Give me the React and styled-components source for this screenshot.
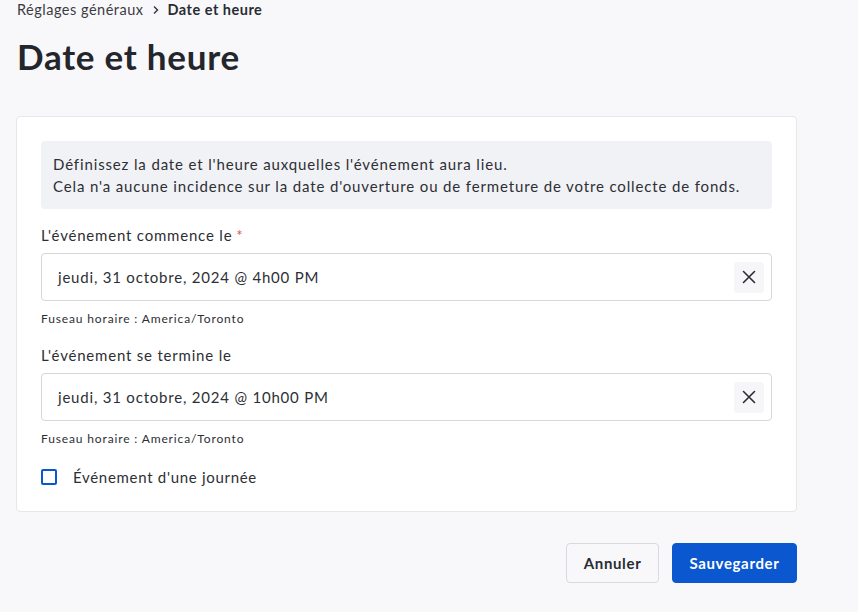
import React from "react";
import styled, { createGlobalStyle } from "styled-components";

const Global = createGlobalStyle`
  html, body { margin: 0; padding: 0; background: #f8f8fb; }
  body { font-family: Lato, "Open Sans", sans-serif; color: #24262b; }
  * { box-sizing: border-box; }
`;

const Page = styled.div`
  width: 781px;
  margin-left: 16px;
  padding-top: 1px;
`;

const Breadcrumb = styled.nav`
  display: flex;
  align-items: center;
  gap: 8px;
  font-size: 14.5px;
  line-height: 18px;
  height: 18px;
  margin-left: 1px;
  letter-spacing: 0.5px;
`;

const Crumb = styled.span`
  font-weight: ${(p) => (p.$current ? 700 : 400)};
  color: ${(p) => (p.$current ? "#2a2c33" : "#3a3c42")};
`;

const Title = styled.h1`
  margin: 17px 0 0 1px;
  font-size: 35px;
  line-height: 40px;
  font-weight: 700;
  letter-spacing: 0.75px;
  color: #24262c;
`;

const Card = styled.section`
  margin-top: 40px;
  background: #fff;
  border: 1px solid #e6e6eb;
  border-radius: 4px;
  padding: 24px 24px 24px;
  display: flex;
  flex-direction: column;
  letter-spacing: 0.8px;
`;

const Info = styled.div`
  background: #f1f2f5;
  border-radius: 4px;
  padding: 12px 12px;
  font-size: 15px;
  line-height: 22px;
  letter-spacing: 0.86px;
  color: #2d2f35;
`;

const Label = styled.div`
  margin-top: ${(p) => p.$mt}px;
  font-size: 15px;
  line-height: 20px;
  color: #2d2f35;
`;

const Req = styled.span`
  color: #d9534f;
  margin-left: 4px;
`;

const InputBox = styled.div`
  margin-top: 8px;
  height: 48px;
  border: 1px solid #d6d6db;
  border-radius: 4px;
  display: flex;
  align-items: center;
  justify-content: space-between;
  padding: 0 7px 0 16px;
  font-size: 15px;
  color: #2d2f35;
`;

const Clear = styled.button`
  width: 30px;
  height: 31px;
  border: none;
  border-radius: 3px;
  background: #f6f6f9;
  display: flex;
  align-items: center;
  justify-content: center;
  padding: 0;
  cursor: pointer;
`;

const Help = styled.div`
  margin-top: 10px;
  font-size: 12px;
  line-height: 16px;
  letter-spacing: 0.86px;
  color: #2d2f35;
`;

const CheckRow = styled.label`
  margin-top: 20px;
  display: flex;
  align-items: center;
  gap: 16px;
  font-size: 15px;
  line-height: 20px;
  letter-spacing: 0.7px;
  color: #2d2f35;
`;

const Box = styled.span`
  width: 16px;
  height: 16px;
  border: 2px solid #0b57d0;
  border-radius: 2px;
  background: #fff;
`;

const Actions = styled.div`
  margin-top: 31px;
  display: flex;
  justify-content: flex-end;
  gap: 13px;
`;

const Button = styled.button`
  height: 40px;
  padding: 0 16.5px;
  border-radius: 4px;
  font-family: Lato, sans-serif;
  font-size: 15px;
  font-weight: 700;
  letter-spacing: 0.65px;
  border: 1px solid ${(p) => (p.$primary ? "#0b57d0" : "#d9d9de")};
  background: ${(p) => (p.$primary ? "#0b57d0" : "#f8f8fb")};
  color: ${(p) => (p.$primary ? "#fff" : "#2a2c33")};
`;

const XIcon = () => (
  <svg width="14" height="14" viewBox="0 0 14 14">
    <path d="M1.5 1.5 L12.5 12.5 M12.5 1.5 L1.5 12.5" stroke="#2b2d33" strokeWidth="1.6" strokeLinecap="round" />
  </svg>
);

const Chevron = () => (
  <svg width="8" height="10" viewBox="0 0 8 10">
    <path d="M2 1.5 L5.5 5 L2 8.5" fill="none" stroke="#3a3c42" strokeWidth="1.5" />
  </svg>
);

const Field = ({ label, required, value, mt }) => (
  <>
    <Label $mt={mt}>
      {label}
      {required && <Req>*</Req>}
    </Label>
    <InputBox>
      <span>{value}</span>
      <Clear aria-label="Effacer">
        <XIcon />
      </Clear>
    </InputBox>
    <Help>Fuseau horaire : America/Toronto</Help>
  </>
);

export default function App() {
  return (
    <>
      <Global />
      <Page>
        <Breadcrumb>
          <Crumb>Réglages généraux</Crumb>
          <Chevron />
          <Crumb $current>Date et heure</Crumb>
        </Breadcrumb>
        <Title>Date et heure</Title>
        <Card>
          <Info>
            Définissez la date et l'heure auxquelles l'événement aura lieu.
            <br />
            Cela n'a aucune incidence sur la date d'ouverture ou de fermeture de votre collecte de fonds.
          </Info>
          <Field label="L'événement commence le" required value="jeudi, 31 octobre, 2024 @ 4h00 PM" mt={16} />
          <Field label="L'événement se termine le" value="jeudi, 31 octobre, 2024 @ 10h00 PM" mt={18} />
          <CheckRow>
            <Box />
            Événement d'une journée
          </CheckRow>
        </Card>
        <Actions>
          <Button>Annuler</Button>
          <Button $primary>Sauvegarder</Button>
        </Actions>
      </Page>
    </>
  );
}
